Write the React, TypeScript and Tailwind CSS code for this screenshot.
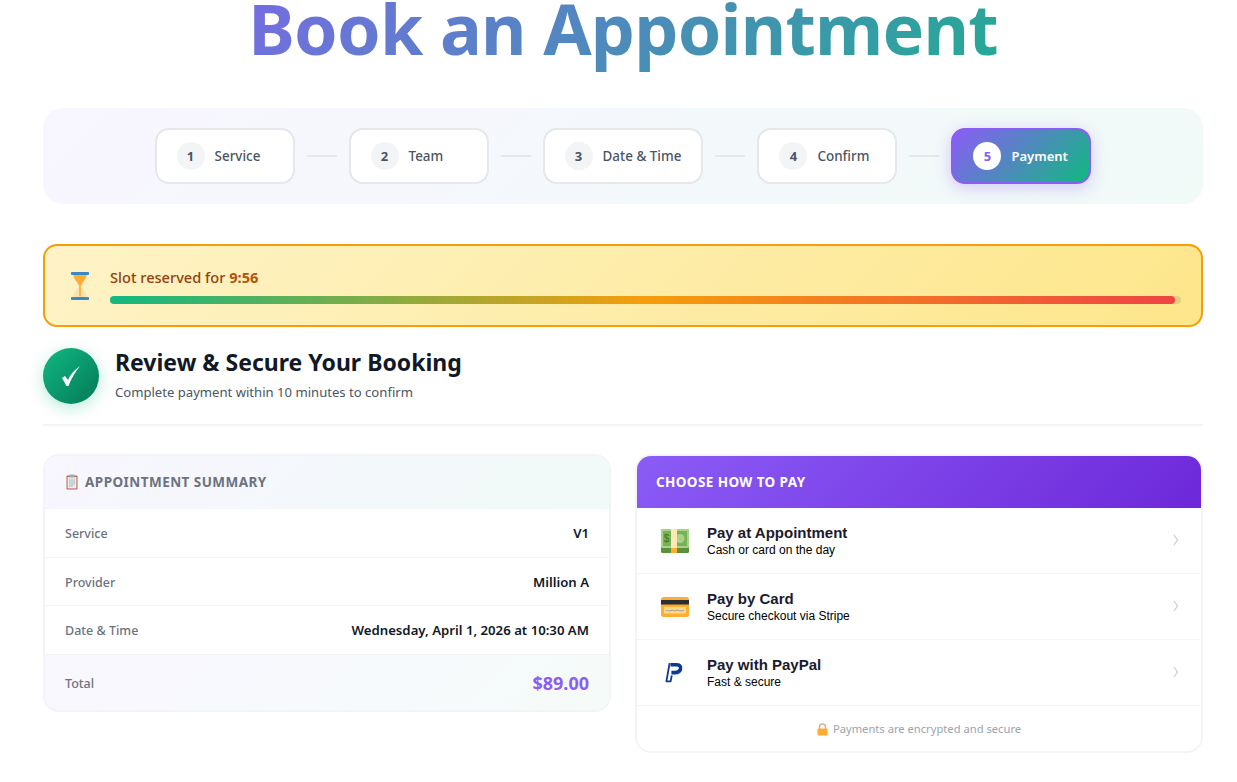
import React from "react";

const sans = "[font-family:'Noto_Sans','Open_Sans',sans-serif]";

function Step({ n, label, active }: { n: number; label: string; active?: boolean }) {
  return (
    <div
      className={
        active
          ? "flex h-14 min-w-[140px] items-center gap-2.5 rounded-[14px] border-2 border-[#8b5cf6] bg-[linear-gradient(135deg,#8b5cf6,#10b981)] px-5 shadow-[0_4px_16px_rgba(139,92,246,0.3)]"
          : "flex h-14 min-w-[140px] items-center gap-2.5 rounded-[14px] border-2 border-[#e5e7eb] bg-white px-5"
      }
    >
      <div
        className={
          active
            ? "flex h-7 w-7 items-center justify-center rounded-full bg-white pt-px text-[13px] font-bold text-[#8b5cf6]"
            : "flex h-7 w-7 items-center justify-center rounded-full bg-[#f3f4f6] pt-px text-[13px] font-bold text-[#4b5563]"
        }
      >
        {n}
      </div>
      <span className={active ? "pt-px text-[13px] font-semibold text-white" : "pt-px text-[13.45px] font-medium text-[#4b5563]"}>{label}</span>
    </div>
  );
}

const Line = () => <div className="mx-3 h-0.5 w-[30px] bg-[#e5e7eb]" />;

function Hourglass() {
  return (
    <svg width="20" height="30" viewBox="0 0 20 30" className="shrink-0">
      <path d="M3 3 H17 C17 9 12 12 11 15 C12 18 17 21 17 27 H3 C3 21 8 18 9 15 C8 12 3 9 3 3Z" fill="#fde3b0" />
      <path d="M3.5 4 H16.5 C16 9 12 11 10.8 15 V25 H9.2 V15 C8 11 4 9 3.5 4Z" fill="#ffac33" />
      <rect x="1" y="1" width="18" height="3" rx="0.8" fill="#3b88c3" />
      <rect x="1" y="26" width="18" height="3" rx="0.8" fill="#3b88c3" />
    </svg>
  );
}

function Clipboard() {
  return (
    <svg width="14" height="16" viewBox="0 0 14 16" className="shrink-0">
      <rect x="1.5" y="1.5" width="11" height="14" rx="0.8" fill="#c1694f" />
      <rect x="2.6" y="3" width="8.8" height="11.4" fill="#e8edf0" />
      <rect x="4.2" y="0.5" width="5.6" height="3" rx="0.6" fill="#99aab5" />
      <path d="M4 6H10M4 8H10M4 10H10M4 12H8" stroke="#99aab5" strokeWidth="0.8" />
    </svg>
  );
}

function Money() {
  return (
    <svg width="30" height="26" viewBox="0 0 30 26">
      <rect x="1" y="1" width="28" height="24" rx="1.5" fill="#5c913b" />
      <rect x="1" y="1" width="28" height="19" rx="1.5" fill="#a6d388" />
      <rect x="3" y="3" width="24" height="15" fill="#77b255" />
      <circle cx="20" cy="10.5" r="4.5" fill="#a6d388" />
      <rect x="11" y="1" width="6" height="19" fill="#ffe8b6" />
      <rect x="11" y="20" width="6" height="5" fill="#ffac33" />
      <text x="6.5" y="14" fontSize="10" fill="#3e721d" textAnchor="middle" className="[font-family:'Liberation_Sans',sans-serif]">$</text>
    </svg>
  );
}

function Card() {
  return (
    <svg width="30" height="22" viewBox="0 0 30 22">
      <rect x="1" y="1" width="28" height="20" rx="2.5" fill="#ffac33" />
      <rect x="1" y="4" width="28" height="4.5" fill="#292f33" />
      <rect x="4" y="11" width="22" height="6.5" fill="#ffd983" />
      <path d="M6 15 C8 13 9 16 11 14.5 S14 16 16 14.5 S20 16 24 14.5" stroke="#8899a6" strokeWidth="0.9" fill="none" />
    </svg>
  );
}

function PayPal() {
  return (
    <svg width="20" height="24" viewBox="1 0 20 24">
      <path d="M6.5 3.8 H12.8 C16.2 3.8 17.2 6 16.4 8.4 C15.6 10.8 13.4 11.6 11 11.6 H7.4" stroke="#0a3a94" strokeWidth="3.6" fill="none" />
      <path d="M5.6 2.2 L2.4 20.4 H6.6 L7.8 14.5" stroke="#0a3a94" strokeWidth="1.8" fill="none" strokeLinejoin="round" />
    </svg>
  );
}

function Lock() {
  return (
    <svg width="11" height="13" viewBox="0 0 11 13" className="shrink-0">
      <path d="M2.5 6 V4 a3 3 0 0 1 6 0 V6" stroke="#c9b79c" strokeWidth="1.5" fill="none" />
      <rect x="0.5" y="5.5" width="10" height="7" rx="1" fill="#ffac33" />
    </svg>
  );
}

function Row({ label, value }: { label: string; value: string }) {
  return (
    <div className="flex h-[48.5px] items-center justify-between border-b border-[#f3f4f6] px-5">
      <span className="pt-1 text-[12.5px] font-medium text-[#6b7280]">{label}</span>
      <span className="pt-[3px] text-[13.2px] font-semibold text-[#111827]">{value}</span>
    </div>
  );
}

function Pay({ icon, title, sub }: { icon: React.ReactNode; title: string; sub: string }) {
  return (
    <div className="flex h-[66px] items-center border-b border-[#f3f4f6] pr-[22px] pl-[22px] [font-family:'Liberation_Sans',Arial,sans-serif]">
      <div className="flex w-[32px] justify-center">{icon}</div>
      <div className="ml-[16px] flex-1">
        <div className="text-[15px] leading-[17px] font-bold text-[#1a1a2e]">{title}</div>
        <div className="mt-[2px] text-[12px] leading-[15px] text-black">{sub}</div>
      </div>
      <svg width="6" height="12" viewBox="0 0 6 12" className="-mt-px">
        <path d="M1 1 L4.5 6 L1 11" stroke="#c9ced6" strokeWidth="1.3" fill="none" />
      </svg>
    </div>
  );
}

export default function App() {
  return (
    <div className={`${sans} h-[782px] w-[1237px] overflow-hidden bg-white`}>
      <div className="ml-[43px] w-[1160px]">
        <div className="-mt-[18px] h-[126px]">
          <h1 className="bg-[linear-gradient(135deg,#8b5cf6,#10b981)] bg-clip-text text-center text-[70px] leading-[92px] font-bold tracking-[-0.8px] text-transparent">
            Book an Appointment
          </h1>
        </div>

        <div className="flex h-24 items-center justify-center rounded-[20px] bg-[linear-gradient(135deg,#f8f6ff,#f0faf7)]">
          <Step n={1} label="Service" />
          <Line />
          <Step n={2} label="Team" />
          <Line />
          <Step n={3} label="Date & Time" />
          <Line />
          <Step n={4} label="Confirm" />
          <Line />
          <Step n={5} label="Payment" active />
        </div>

        <div className="mt-10 flex h-[83px] items-center gap-5 rounded-[14px] border-2 border-[#f59e0b] bg-[linear-gradient(135deg,#fef3c7,#fde68a)] pr-5 pl-[25px]">
          <Hourglass />
          <div className="flex-1">
            <div className="text-[14.6px] leading-[18px] font-medium text-[#92400e]">
              Slot reserved for <span className="font-bold text-[#b45309]">9:56</span>
            </div>
            <div className="mt-2.5 h-2 rounded-full bg-black/10">
              <div
                className="h-2 rounded-full bg-[linear-gradient(90deg,#10b981,#f59e0b,#ef4444)]"
                style={{ width: "99.4%" }}
              />
            </div>
          </div>
        </div>

        <div className="mt-[21px] flex h-[78px] gap-4 border-b-2 border-[#f3f4f6]">
          <div className="flex h-14 w-14 items-center justify-center rounded-full bg-[linear-gradient(135deg,#10b981,#047857)] shadow-[0_4px_16px_rgba(16,185,129,0.3)]">
            <svg width="20" height="22" viewBox="0 0 20 22">
              <path d="M1 13 L4 11 L7 15 C9 10 13 5 19 1 C14 7 10 14 7.5 21 H5.5 Z" fill="white" />
            </svg>
          </div>
          <div className="-mt-px">
            <div className="text-[23px] leading-[30px] font-bold text-[#111827]">Review & Secure Your Booking</div>
            <div className="mt-[1px] text-[13.1px] leading-[28px] text-[#4b5563]">Complete payment within 10 minutes to confirm</div>
          </div>
        </div>

        <div className="mt-7 grid grid-cols-2 items-start gap-6">
          <div className="overflow-hidden rounded-2xl border-2 border-[#f3f4f6]">
            <div className="flex h-[53px] items-center gap-1.5 border-b border-[#f3f4f6] bg-[linear-gradient(135deg,#f8f6ff,#f0faf7)] px-5 text-[13.5px] font-bold tracking-[0.45px] text-[#6b7280] uppercase">
              <Clipboard />
              Appointment Summary
            </div>
            <Row label="Service" value="V1" />
            <Row label="Provider" value="Million A" />
            <Row label="Date & Time" value="Wednesday, April 1, 2026 at 10:30 AM" />
            <div className="flex h-[55px] items-center justify-between bg-[linear-gradient(135deg,#f9f7ff,#f5fbf9)] px-5">
              <span className="pt-1 text-[12.5px] font-medium text-[#6b7280]">Total</span>
              <span className="pt-0.5 text-[18px] font-bold text-[#8b5cf6]">$89.00</span>
            </div>
          </div>

          <div className="overflow-hidden rounded-2xl border-2 border-[#f3f4f6]">
            <div className="flex h-[52px] items-center bg-[linear-gradient(135deg,#8b5cf6,#6d28d9)] px-[19px] text-[13.5px] font-bold tracking-[0.4px] text-white uppercase">
              Choose how to pay
            </div>
            <Pay icon={<Money />} title="Pay at Appointment" sub="Cash or card on the day" />
            <Pay icon={<Card />} title="Pay by Card" sub="Secure checkout via Stripe" />
            <Pay icon={<PayPal />} title="Pay with PayPal" sub="Fast & secure" />
            <div className="flex h-[45px] items-center justify-center gap-[5px] pt-px text-[11.2px] text-[#9ca3af]">
              <Lock />
              Payments are encrypted and secure
            </div>
          </div>
        </div>
      </div>
    </div>
  );
}
